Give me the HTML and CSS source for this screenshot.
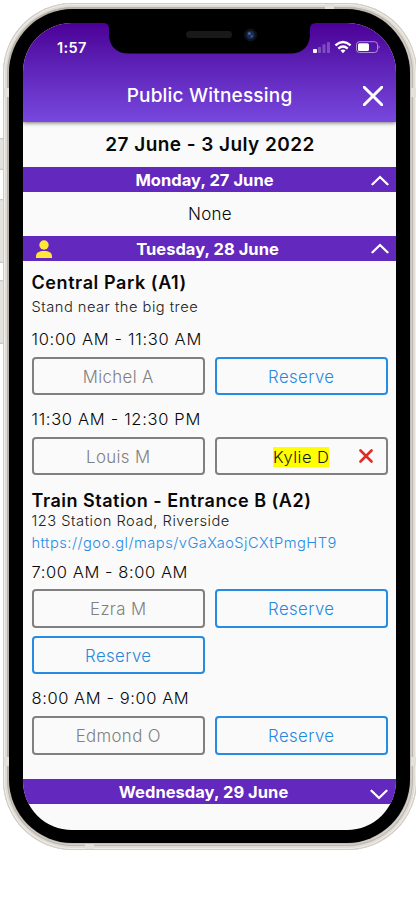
FILE: index.html
```
<!DOCTYPE html>
<html lang="en">
<head>
<meta charset="utf-8">
<title>Public Witnessing</title>
<link rel="stylesheet" href="styles.css">
</head>
<body>
<div class="stage">
  <i class="side-key key-mute"></i><i class="side-key key-up"></i><i class="side-key key-down"></i>
  <main class="phone">
    <i class="band band-l1"></i><i class="band band-l2"></i><i class="band band-r1"></i><i class="band band-r2"></i><i class="band band-top"></i><i class="band band-bottom"></i>
    <div class="bezel">
      <div class="screen">
        <svg class="notch" viewBox="0 0 214 31" aria-hidden="true">
          <path d="M0 0H214C209 0 207 2 207 6V11C207 23 200 30.5 187 30.5H26C13 30.5 6 23 6 11V6C6 2 4 0 0 0Z"/>
          <rect x="83" y="8" width="46" height="7" rx="3.5" fill="#191919"/>
          <circle cx="147.5" cy="12" r="6.5" fill="#0d1218"/>
          <circle cx="147.5" cy="12" r="4.2" fill="#18294b"/>
          <circle cx="146.3" cy="10.5" r="1.5" fill="#4265a8"/>
          <circle cx="148.7" cy="13.2" r="1.2" fill="#38548e"/>
        </svg>
        <header class="header">
          <div class="status">
            <span class="time">1:57</span>
            <svg class="status-icons" viewBox="0 0 68 14" fill="#fff" aria-hidden="true">
              <rect x="1" y="9" width="4" height="4" rx="1"/>
              <g opacity=".24"><rect x="6" y="7" width="3" height="6" rx=".8"/><rect x="10.5" y="4.3" width="3" height="8.7" rx=".8"/><rect x="15" y="2" width="3" height="11" rx=".8"/></g>
              <g fill="none" stroke="#fff" stroke-width="2.4"><path d="M23.4 5.4Q31-1.3 38.6 5.4"/><path d="M26.3 8.7Q31 4.5 35.7 8.7"/></g>
              <path d="M28.5 10.6Q31 8.6 33.5 10.6L31 13.2Z"/>
              <rect x="44.5" y="1.7" width="21" height="10.8" rx="3" fill="none" stroke="#fff" stroke-opacity=".5"/>
              <rect x="46" y="3.2" width="11" height="7.8" rx="1.6"/>
              <path d="M66.6 5.3Q68.4 7 66.6 8.8Z" opacity=".6"/>
            </svg>
          </div>
          <div class="title-row">
            <h1>Public Witnessing</h1>
            <svg class="close" viewBox="0 0 20 20" aria-hidden="true"><path d="M1.2 1.2L18.8 18.8M18.8 1.2L1.2 18.8"/></svg>
          </div>
        </header>
        <h2 class="week">27 June - 3 July 2022</h2>
        <div class="day"><span class="monday">Monday, 27 June</span><svg class="chevron" viewBox="0 0 18 11"><path d="M1.5 9.3L9 2L16.5 9.3"/></svg></div>
        <p class="none">None</p>
        <div class="day"><svg class="person" viewBox="0 0 16 18"><circle cx="8" cy="5" r="4.7"/><path d="M0 18V16.5C0 12.6 3 11 8 11S16 12.6 16 16.5V18Z"/></svg><span class="tuesday">Tuesday, 28 June</span><svg class="chevron" viewBox="0 0 18 11"><path d="M1.5 9.3L9 2L16.5 9.3"/></svg></div>
        <section class="schedule">
          <h3 class="park">Central Park (A1)</h3>
          <p class="note tree">Stand near the big tree</p>
          <p class="slot-time first">10:00 AM - 11:30 AM</p>
          <div class="slots"><div class="slot taken">Michel A</div><div class="slot">Reserve</div></div>
          <p class="slot-time second">11:30 AM - 12:30 PM</p>
          <div class="slots"><div class="slot taken">Louis M</div><div class="slot taken mine"><mark>Kylie D</mark><svg class="remove" viewBox="0 0 14 14"><path d="M1.5 1.5L12.5 12.5M12.5 1.5L1.5 12.5"/></svg></div></div>
          <h3 class="station">Train Station - Entrance B (A2)</h3>
          <p class="note address">123 Station Road, Riverside</p>
          <p class="note link">https://goo.gl/maps/vGaXaoSjCXtPmgHT9</p>
          <p class="slot-time third">7:00 AM - 8:00 AM</p>
          <div class="slots"><div class="slot taken">Ezra M</div><div class="slot">Reserve</div><div class="slot">Reserve</div></div>
          <p class="slot-time fourth">8:00 AM - 9:00 AM</p>
          <div class="slots"><div class="slot taken">Edmond O</div><div class="slot">Reserve</div></div>
        </section>
        <div class="day"><span class="wednesday">Wednesday, 29 June</span><svg class="chevron down" viewBox="0 0 18 11"><path d="M1.5 1.7L9 9L16.5 1.7"/></svg></div>
      </div>
    </div>
  </main>
</div>
</body>
</html>
```
FILE: styles.css
```
* { box-sizing: border-box; }
body, h1, h2, h3, p { margin: 0; }
body { background: #fff; font-family: Inter, "Liberation Sans", sans-serif; color: #080808; }
.stage { position: relative; width: 416px; height: 900px; padding: 3px 0 0 3px; overflow: hidden; }
.phone {
  position: relative; width: 414px; height: 847px; padding: 6px 7px 7px 6px;
  border-radius: 70px; background: #eeebe6;
  box-shadow: inset 0 0 0 1px #cfccc5, inset 0 0 0 2px #f1eee9, inset 0 0 0 4px #e0dcd5, inset 0 0 2px 5px #aaa59b;
}
.bezel { position: relative; height: 834px; padding: 14px; background: #000; border-radius: 64px; box-shadow: 0 0 2px 0 #524d44; }
.screen { position: relative; width: 373px; height: 807px; overflow: hidden; background: #fafafa; border-radius: 49px; }
.side-key { position: absolute; left: -1px; width: 5px; border: 1px solid #c6c3bd; background: #e4e2dd; border-radius: 2px; }
.key-mute { top: 138px; height: 32px; }
.key-up { top: 199px; height: 64px; }
.key-down { top: 280px; height: 64px; }
.band { position: absolute; background: #e4e1dc; z-index: 1; }
.band-l1, .band-l2, .band-r1, .band-r2 { width: 5px; height: 9px; }
.band-l1, .band-r1 { top: 85px; }
.band-l2, .band-r2 { top: 754px; }
.band-l1, .band-l2 { left: 1px; }
.band-r1, .band-r2 { right: 1px; }
.band-top { left: 322px; top: 1px; width: 9px; height: 5px; }
.band-bottom { left: 82px; bottom: 1px; width: 9px; height: 5px; }
.notch { position: absolute; z-index: 3; left: 80px; top: 0; width: 214px; height: 31px; }
.header { position: relative; height: 99px; background: linear-gradient(#4b0096, #5a1cb0 35%, #7848df); color: #fff; box-shadow: 0 1px 4px #0008; }
.status { display: flex; justify-content: space-between; height: 47px; padding: 16px 16px 0 34px; }
.time { font-size: 14.5px; line-height: 17px; font-weight: 600; letter-spacing: .35px; }
.status-icons { width: 68px; height: 14px; margin-top: 1px; }
.title-row { display: grid; grid-template-columns: 1fr auto 1fr; align-items: center; height: 52px; }
h1 { grid-column: 2; font-size: 19px; line-height: 24px; font-weight: 500; letter-spacing: .2px; }
.close { justify-self: end; width: 20px; height: 20px; margin-right: 13px; fill: none; stroke: #fff; stroke-width: 3; stroke-linecap: round; }
.week { height: 45px; line-height: 45px; font-size: 19px; font-weight: 600; letter-spacing: .44px; text-align: center; padding-left: 1px; }
.day { display: grid; grid-template-columns: 1fr auto 1fr; align-items: center; height: 25px; background: #6328bd; color: #fff; font-size: 16.5px; line-height: 26px; font-weight: 700; letter-spacing: .04px; white-space: nowrap; }
.day > span { grid-column: 2; }
.monday, .tuesday { position: relative; left: -5px; }
.tuesday { left: -2px; }
.wednesday { position: relative; left: -6px; }
.chevron { grid-column: 3; justify-self: end; width: 18px; height: 11px; margin-right: 7px; fill: none; stroke: #fff; stroke-width: 2.3; stroke-linecap: round; stroke-linejoin: miter; }
.chevron.down { margin-right: 8px; position: relative; top: 2px; }
.person { grid-column: 1; width: 16px; height: 18px; margin-left: 13px; fill: #ffe638; }
.none { height: 43.5px; line-height: 44px; text-align: center; font-size: 17px; font-weight: 350; letter-spacing: .3px; padding-left: 1px; }
.schedule { height: 518.5px; padding: 9px 8px 0 8.5px; white-space: nowrap; }
h3 { height: 24px; line-height: 25px; font-size: 18px; font-weight: 600; letter-spacing: .52px; }
h3.park { letter-spacing: .58px; }
h3.station { margin-top: 12.5px; }
.note { font-size: 14.7px; height: 25px; line-height: 26px; font-weight: 350; letter-spacing: .48px; color: #222; }
.note.address { height: 18.5px; line-height: 18px; letter-spacing: .5px; }
.note.link { color: #268be4; height: 23.5px; line-height: 26px; letter-spacing: .46px; }
.slot-time { height: 38px; line-height: 40px; font-size: 16.5px; font-weight: 350; letter-spacing: .68px; }
.slot-time.second { height: 41.5px; line-height: 48px; }
.slot-time.third { height: 35.5px; line-height: 36px; letter-spacing: .57px; }
.slot-time.fourth { height: 42px; line-height: 49px; letter-spacing: .57px; }
.slots { display: grid; grid-template-columns: 173.5px 173.5px; gap: 8px 9.5px; }
.slot { display: flex; justify-content: center; align-items: center; height: 38.5px; padding-top: 3px; border: 2px solid #258be3; border-radius: 4px; color: #2588df; font-size: 16.8px; font-weight: 350; line-height: 21px; letter-spacing: .4px; }
.slot.taken { border-color: #808080; color: #808080; letter-spacing: .38px; }
.slot.mine { position: relative; padding-top: 2px; }
.slot.taken mark { background: #ff0; color: #181818; font-size: 16.5px; line-height: 20px; letter-spacing: .48px; }
.remove { position: absolute; right: 13.5px; top: 10.5px; width: 14px; height: 14px; fill: none; stroke: #e02c24; stroke-width: 2.6; stroke-linecap: round; }
```
